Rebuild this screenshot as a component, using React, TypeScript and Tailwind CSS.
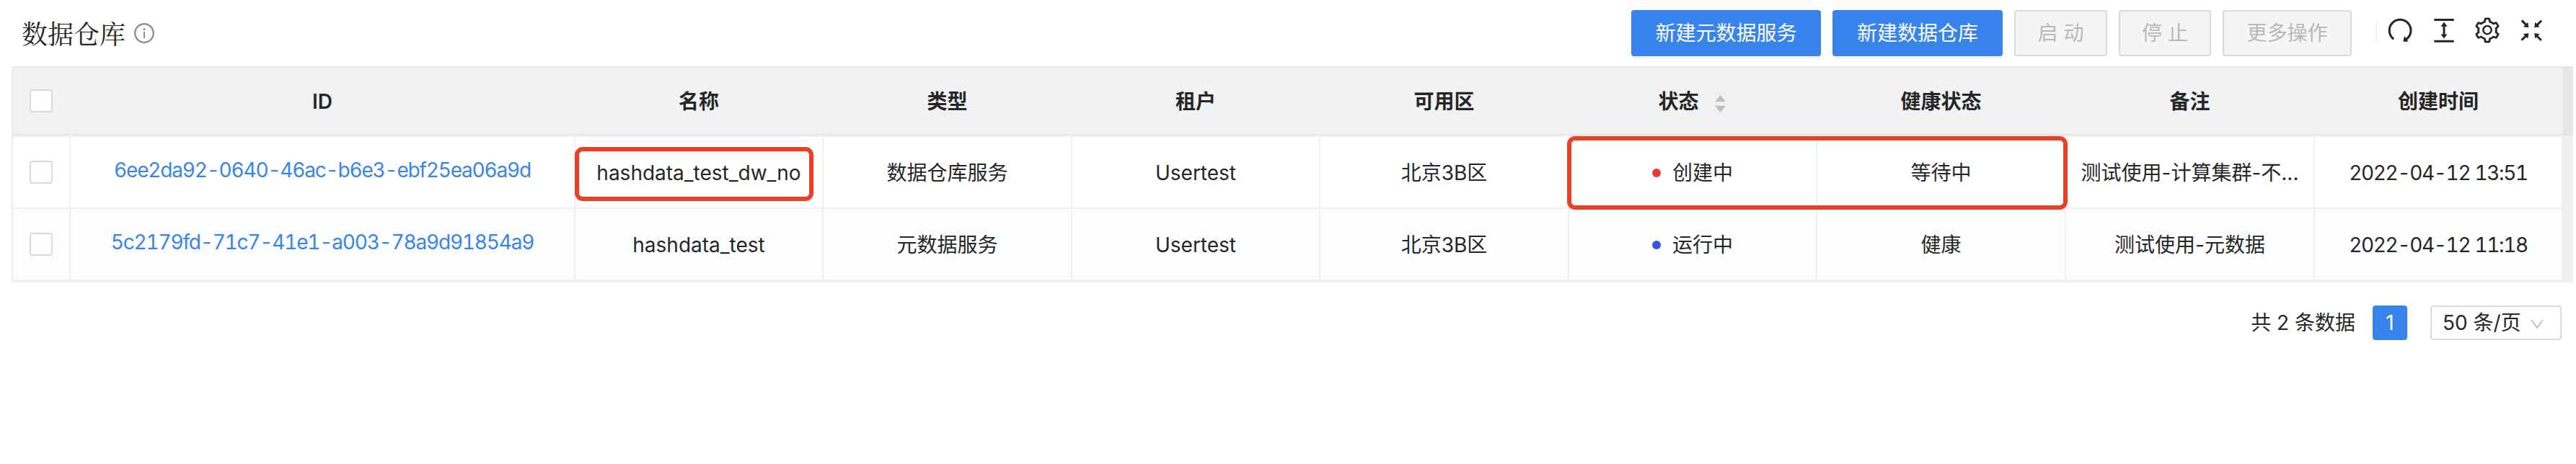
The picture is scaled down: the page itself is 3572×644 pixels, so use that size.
import type { ReactNode } from "react"
import { AiOutlineDown, AiOutlineInfoCircle, AiOutlineSetting } from "react-icons/ai"

const columns = ["ID", "名称", "类型", "租户", "可用区", "状态", "健康状态", "备注", "创建时间"]

const rows = [
    {
        id: "6ee2da92-0640-46ac-b6e3-ebf25ea06a9d",
        name: "hashdata_test_dw_no",
        type: "数据仓库服务",
        tenant: "Usertest",
        zone: "北京3B区",
        status: "创建中",
        dot: "bg-[#e23c39]",
        health: "等待中",
        remark: "测试使用-计算集群-不...",
        created: "2022-04-12 13:51",
        marked: true,
    },
    {
        id: "5c2179fd-71c7-41e1-a003-78a9d91854a9",
        name: "hashdata_test",
        type: "元数据服务",
        tenant: "Usertest",
        zone: "北京3B区",
        status: "运行中",
        dot: "bg-[#3557e0]",
        health: "健康",
        remark: "测试使用-元数据",
        created: "2022-04-12 11:18",
        marked: false,
    },
]

const grid = "grid grid-cols-[80px_700px_344px_345px_344px_345px_344px_345px_345px_344px]"
const primaryButton = "h-16 rounded bg-[#3884ec] text-white shadow-[0_4px_0_rgba(0,0,0,0.045)]"
const disabledButton = "ml-4 h-16 rounded border-2 border-[#d9d9d9] bg-[#f5f5f5] text-[#b8b8b8]"

function Checkbox() {
    return <span className="h-8 w-8 rounded border-2 border-[#d9d9d9] bg-white" />
}

function ReloadIcon() {
    return (
        <svg viewBox="0 0 40 40" className="h-10 w-10" fill="none" stroke="currentColor" strokeWidth="3">
            <path d="M11.2 32.2A14.9 14.9 0 1 1 28.4 32.6" />
            <path d="M24.3 35.8L26 28l5.6 7.8z" fill="currentColor" stroke="none" />
        </svg>
    )
}

function ColumnHeightIcon() {
    return (
        <svg viewBox="0 0 40 40" className="h-10 w-10" fill="currentColor">
            <path d="M6.3 4h27.4v3H6.3zM6.3 33.8h27.4v3H6.3z" />
            <path d="M20 8.6l4.5 6.2h-3v10.6h3L20 31.6l-4.5-6.2h3V14.8h-3z" />
        </svg>
    )
}

function ShrinkIcon() {
    return (
        <svg viewBox="0 0 40 40" className="h-10 w-10" fill="currentColor">
            {[0, 90, 180, 270].map((angle) => (
                <path
                    key={angle}
                    transform={`rotate(${angle} 20.3 20.2)`}
                    d="M5.7 7.4L7.8 5.3 13.3 10.8 15.3 8.8 16.4 16.3 8.9 15.2 11.1 12.9z"
                />
            ))}
        </svg>
    )
}

function SortIcon() {
    return (
        <svg viewBox="0 0 15 24" className="mt-1.5 mr-0.5 ml-[22px] h-6 w-[15px] fill-[#bfbfbf]">
            <path d="M7.5 0l7.5 9.3H0zM7.5 24l7.5-9.3H0z" />
        </svg>
    )
}

function Cell({ children, className = "" }: { children: ReactNode; className?: string }) {
    return (
        <div className={`relative flex items-center justify-center border-r-2 border-[#f0f0f0] whitespace-nowrap ${className}`}>
            {children}
        </div>
    )
}

export default function App() {
    return (
        <div className="h-[644px] w-[3572px] overflow-hidden bg-white font-[Inter,'Noto_Sans_CJK_SC',sans-serif] text-[28px] text-[#262626]">
            <header className="flex h-[92px] items-center">
                <h1 className="ml-[30px] font-['Noto_Serif_CJK_SC','Noto_Sans_CJK_SC',serif] text-[36px]">数据仓库</h1>
                <AiOutlineInfoCircle className="ml-[10px] h-8 w-8 text-[#8c8f94]" />
                <div className="ml-auto flex items-center">
                    <button className={`${primaryButton} w-[263px]`}>新建元数据服务</button>
                    <button className={`${primaryButton} ml-4 w-[236px]`}>新建数据仓库</button>
                    <button className={`${disabledButton} w-[129px]`}>启 动</button>
                    <button className={`${disabledButton} w-[128px]`}>停 止</button>
                    <button className={`${disabledButton} w-[179px]`}>更多操作</button>
                    <span className="mb-0.5 ml-[33px] h-[25px] w-0.5 bg-[#f0f0f0]" />
                    <div className="mr-[42px] mb-2 ml-3 flex w-[222px] items-center justify-between">
                        <ReloadIcon />
                        <ColumnHeightIcon />
                        <AiOutlineSetting className="h-10 w-10" />
                        <ShrinkIcon />
                    </div>
                </div>
            </header>

            <main className="mr-1 ml-4 flex">
                <div className="border-l-2 border-[#ebecee]">
                    <div className={`${grid} h-[96px] border-y-2 border-[#e6e7e9] bg-[#f1f2f4] font-semibold`}>
                        <Cell className="border-[#e6e7e9]"><Checkbox /></Cell>
                        {columns.map((column) => (
                            <Cell key={column} className="border-[#e6e7e9] pt-px">
                                {column}
                                {column === "状态" && <SortIcon />}
                            </Cell>
                        ))}
                    </div>
                    <div className="border-y-2 border-[#f0f0f0]">
                        {rows.map((row) => (
                            <div key={row.id} className={`${grid} h-[100px] border-b-2 border-[#f0f0f0] even:bg-[#fcfdff]`}>
                                <Cell><Checkbox /></Cell>
                                <Cell className="pb-1.5 tracking-[-1.2px] text-[#3884ec] tabular-nums">{row.id}</Cell>
                                <Cell className="pt-0.5">
                                    {row.name}
                                    {row.marked && (
                                        <span className="absolute top-[14px] -left-px h-[75px] w-[331px] rounded-[11px] border-6 border-[#ec4025]" />
                                    )}
                                </Cell>
                                <Cell className="pt-0.5">{row.type}</Cell>
                                <Cell className="pt-0.5">{row.tenant}</Cell>
                                <Cell className="pt-0.5">{row.zone}</Cell>
                                <Cell className="pt-0.5">
                                    <span className={`mr-4 h-3 w-3 rounded-full ${row.dot}`} />
                                    {row.status}
                                    {row.marked && (
                                        <span className="absolute -top-px -left-[3px] z-10 h-[102px] w-[694px] rounded-[11px] border-6 border-[#ec4025]" />
                                    )}
                                </Cell>
                                <Cell className="pt-0.5">{row.health}</Cell>
                                <Cell className="pt-0.5">{row.remark}</Cell>
                                <Cell className="border-r-0 pt-0.5 tracking-[-1.35px] tabular-nums">{row.created}</Cell>
                            </div>
                        ))}
                    </div>
                </div>
                <div className="flex flex-1 flex-col">
                    <div className="h-[96px] bg-[#e4e5e7]" />
                    <div className="flex-1 bg-[#f0f0f1]" />
                </div>
            </main>

            <footer className="mt-8 mr-5 flex h-12 items-center justify-end">
                <span>共 2 条数据</span>
                <span className="ml-6 flex h-12 w-12 items-center justify-center rounded bg-[#3884ec] text-white">1</span>
                <div className="ml-8 flex h-12 w-[182px] items-center rounded border-2 border-[#d9d9d9] pl-[15px]">
                    50 条/页
                    <AiOutlineDown className="mt-1 mr-5 ml-auto h-6 w-6 text-[#bfbfbf]" />
                </div>
            </footer>
        </div>
    )
}
